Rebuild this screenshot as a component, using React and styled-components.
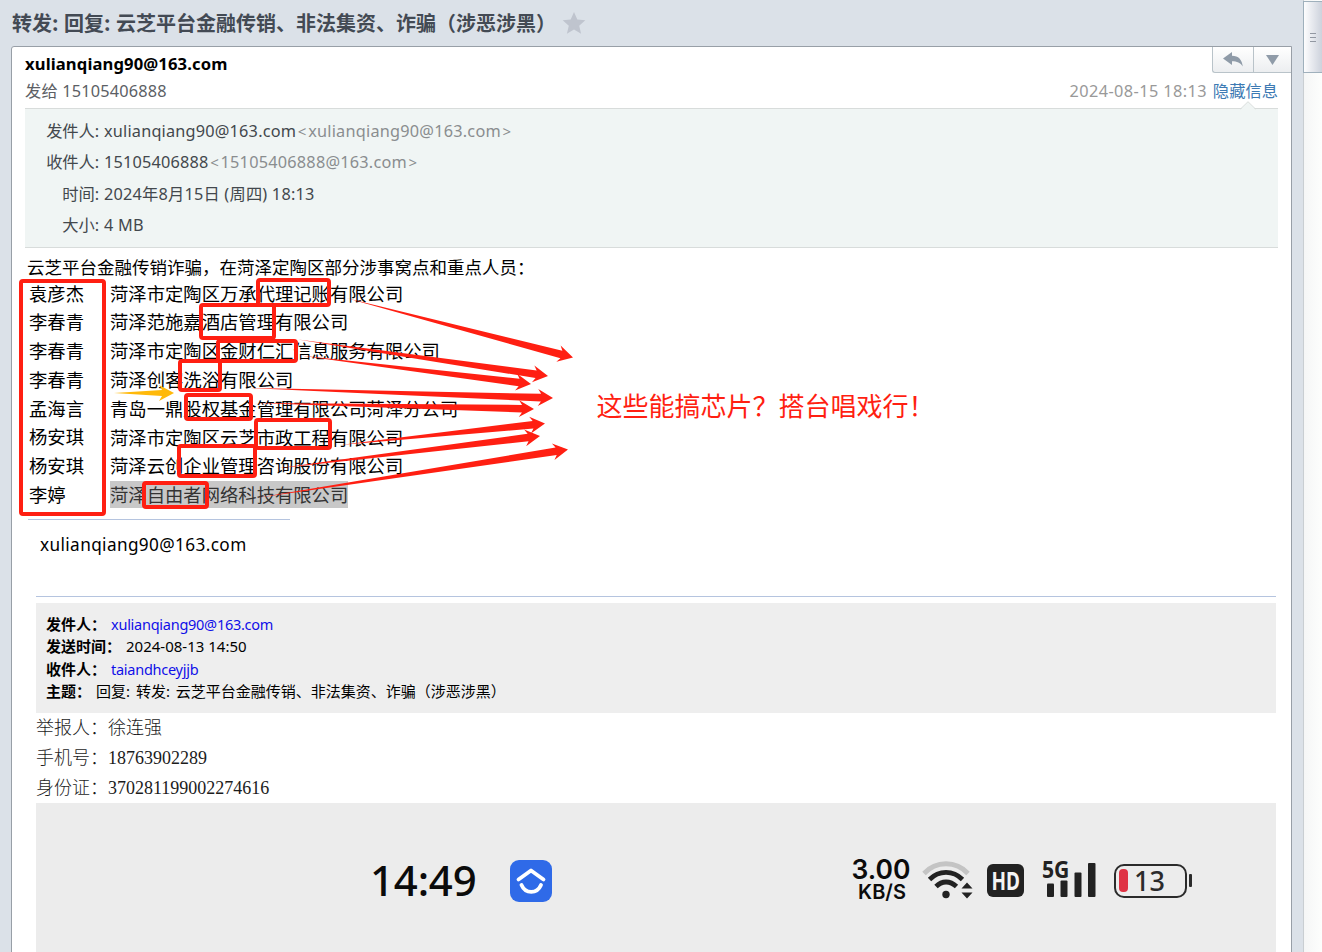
import React from "react";
import styled, { createGlobalStyle } from "styled-components";

const RED = "#ff1f12";

const GlobalStyle = createGlobalStyle`
  * { box-sizing: border-box; }
  body {
    margin: 0;
    overflow: hidden;
    background: #dbe1e8;
    font-family: "Noto Sans", "Noto Sans CJK SC", sans-serif;
  }
`;

const Page = styled.div`
  display: flex;
  width: 1322px;
  height: 952px;
  overflow: hidden;
  background: #dbe1e8;
`;

const Reader = styled.main`
  width: 1303px;
  padding: 0 11px;
  display: flex;
  flex-direction: column;
`;

const Subject = styled.header`
  flex: none;
  display: flex;
  align-items: center;
  gap: 6px;
  height: 46px;
  padding-left: 1px;
`;

const SubjectText = styled.h1`
  margin: 0;
  font: 700 20px/46px "Noto Sans CJK SC", sans-serif;
  color: #434a54;
  word-spacing: 1px;
  white-space: pre;
`;

const Card = styled.article`
  position: relative;
  flex: none;
  height: 920px;
  padding: 0 13px;
  background: #fff;
  border: 1px solid #989fa7;
  border-radius: 3px 0 0 0;
`;

const Actions = styled.div`
  position: absolute;
  top: 0;
  right: 0;
  display: flex;
  height: 26px;
  border: solid #b9c3c9;
  border-width: 0 0 1px 1px;
  border-radius: 0 0 0 3px;
  background: linear-gradient(#fff, #eceef0);
`;

const Action = styled.span`
  display: flex;
  align-items: center;
  justify-content: center;
  width: ${(p) => p.$width}px;
  border-left: ${(p) => (p.$divided ? "1px solid #b9c3c9" : "0")};
`;

const Sender = styled.div`
  height: 34px;
  font-size: 16.6px;
  line-height: 34px;
  font-weight: 700;
  letter-spacing: 0.13px;
`;

const MetaLine = styled.div`
  display: flex;
  justify-content: space-between;
  height: 27px;
  font-size: 16.3px;
  line-height: 20px;
  color: #5c6065;
  letter-spacing: 0.18px;
`;

const Sent = styled.span`
  color: #999;
  letter-spacing: 0.4px;
`;

const HideLink = styled.a`
  margin-left: 6px;
  color: #3d7ab3;
  letter-spacing: 0;
`;

const Details = styled.section`
  position: relative;
  height: 140px;
  padding-top: 7px;
  background: #f0f5f4;
  border: solid #d8dcdb;
  border-width: 1px 0;
`;

const Pointer = styled.svg`
  position: absolute;
  top: -8px;
  right: 22px;
`;

const DetailRow = styled.div`
  display: flex;
  height: 31.3px;
  font-size: 16.3px;
  line-height: 31.3px;
  color: #43484d;
  letter-spacing: 0.19px;
  white-space: pre;
`;

const DetailLabel = styled.span`
  width: 74px;
  margin-right: 5px;
  text-align: right;
  letter-spacing: -0.1px;
`;

const Address = styled.span`
  color: #8a8d8f;
  letter-spacing: 0.22px;
`;

const Bracket = styled.span`
  display: inline-block;
  width: 12px;
  font-size: 15px;
  text-align: center;
`;

const Intro = styled.p`
  margin: 7px 0 0 2px;
  height: 23.5px;
  font: 17.5px/24px "Noto Sans CJK SC", sans-serif;
  color: #000;
`;

const Suspects = styled.div`
  margin-left: 4px;
  font: 18.33px/28.8px "Noto Sans CJK SC", sans-serif;
  color: #000;
`;

const Suspect = styled.div`
  display: flex;
  height: 28.8px;
`;

const Name = styled.span`
  width: 81px;
`;

const Company = styled.span`
  display: flex;
  align-items: center;
  height: 27px;
  margin-top: 1px;
  background: ${(p) => (p.$selected ? "#c8c8c8" : "transparent")};
  color: ${(p) => (p.$selected ? "#333" : "#000")};
`;

const Rule = styled.div`
  height: 1px;
  width: ${(p) => p.$width}px;
  margin: ${(p) => p.$margin};
  background: #b5c4df;
`;

const Signature = styled.div`
  margin: 13px 0 0 15px;
  height: 24px;
  font-size: 17.2px;
  line-height: 24px;
  letter-spacing: 0.38px;
`;

const Quoted = styled.section`
  width: 1240px;
  height: 110px;
  margin: 6px 0 0 11px;
  padding: 9.6px 10px 0;
  background: #eee;
  font-size: 15px;
  line-height: 22.4px;
`;

const QuotedRow = styled.div`
  display: flex;
  height: 22.4px;
  color: #000;
  word-spacing: ${(p) => p.$gap || 0}px;
  white-space: pre;
`;

const QuotedLabel = styled.b`
  margin-right: 5px;
`;

const QuotedLink = styled.a`
  color: #1010e8;
  font-size: 14.5px;
  letter-spacing: -0.26px;
`;

const Reporter = styled.div`
  margin-left: 11px;
  height: 30px;
  font: 300 18px/30px "Liberation Serif", "Noto Sans CJK SC", serif;
  color: #1c1c1c;
  white-space: pre;
`;

const Attachment = styled.div`
  display: flex;
  align-items: center;
  width: 1240px;
  height: 170px;
  margin-left: 11px;
  padding: 0 84px 15px 334px;
  background: #ececec;
  color: #0b0b0b;
`;

const Clock = styled.span`
  width: 140px;
  margin-top: -1px;
  font-size: 42px;
  line-height: 50px;
  font-weight: 500;
  letter-spacing: -0.2px;
`;

const Speed = styled.div`
  width: 60px;
  margin: 0 11px 0 299px;
  font-family: Inter, sans-serif;
  font-weight: 600;
  text-align: center;
`;

const SpeedValue = styled.div`
  font-size: 26.5px;
  line-height: 23px;
`;

const SpeedUnit = styled.div`
  margin-right: -2px;
  font-size: 20px;
  line-height: 22px;
`;

const HdBadge = styled.span`
  width: 37px;
  height: 33px;
  margin: 0 18px 0 14px;
  border-radius: 6px;
  background: #222;
  color: #f4f4f4;
  font: 700 25px/33px "Noto Sans", sans-serif;
  text-align: center;
`;

const HdText = styled.span`
  display: inline-block;
  margin: 0 -5px;
  transform: scaleX(0.76);
`;

const Signal = styled.div`
  position: relative;
  width: 54px;
  height: 38px;
`;

const Network = styled.span`
  position: absolute;
  left: 0;
  top: -5px;
  font: 700 23px/24px "Noto Sans", sans-serif;
  color: #222;
  transform: scaleX(0.92);
  transform-origin: left;
`;

const Battery = styled.div`
  position: relative;
  display: flex;
  align-items: center;
  width: 73px;
  height: 34px;
  margin-left: 18px;
  padding-left: 3px;
  border: 2.5px solid #2b2b2b;
  border-radius: 10px;
  font-size: 27px;
  line-height: 28px;
  font-weight: 500;
  color: #2b2b2b;

  &::after {
    content: "";
    position: absolute;
    right: -7px;
    top: 8px;
    width: 3px;
    height: 13px;
    border-radius: 1px;
    background: #2b2b2b;
  }
`;

const Charge = styled.span`
  width: 9px;
  height: 23px;
  margin-right: 6px;
  border-radius: 4px;
  background: #df3344;
`;

const Scrollbar = styled.aside`
  width: 19px;
  height: 952px;
  padding-top: 1px;
  background: linear-gradient(90deg, #f5f6f6, #fdfefd);
  border-left: 1px solid #c9ced2;
`;

const Thumb = styled.div`
  display: flex;
  flex-direction: column;
  align-items: center;
  justify-content: center;
  gap: 3px;
  height: 72px;
  margin-left: -1px;
  border: 1px solid #9fb0bc;
  border-right: 0;
  background: linear-gradient(90deg, #fdfdfe, #cdd2dc);
`;

const Grip = styled.i`
  width: 6px;
  height: 1px;
  background: #9298a2;
`;

const Markup = styled.svg`
  position: absolute;
  left: 0;
  top: 0;
  pointer-events: none;
`;

const Frame = styled.div`
  position: absolute;
  left: ${(p) => p.$x}px;
  top: ${(p) => p.$y}px;
  width: ${(p) => p.$w}px;
  height: ${(p) => p.$h}px;
  border: 4px solid ${RED};
  border-radius: 4px;
`;

const Remark = styled.div`
  position: absolute;
  left: 596.5px;
  top: 387px;
  font: 26px/36px "Noto Sans CJK SC", sans-serif;
  color: ${RED};
  white-space: nowrap;
`;

const suspects = [
  ["袁彦杰", "菏泽市定陶区万承代理记账有限公司"],
  ["李春青", "菏泽范施嘉酒店管理有限公司"],
  ["李春青", "菏泽市定陶区金财仁汇信息服务有限公司"],
  ["李春青", "菏泽创客洗浴有限公司"],
  ["孟海言", "青岛一鼎股权基金管理有限公司菏泽分公司"],
  ["杨安琪", "菏泽市定陶区云芝市政工程有限公司"],
  ["杨安琪", "菏泽云创企业管理咨询股份有限公司"],
  ["李婷", "菏泽自由者网络科技有限公司"],
];

const frames = [
  [19, 279, 87, 237],
  [256, 278, 75, 29],
  [199, 303, 77, 37],
  [216, 339, 82, 24],
  [178, 359, 44, 33],
  [184, 393, 69, 28],
  [254, 418, 78, 32],
  [177, 444, 80, 34],
  [142, 481, 67, 28],
];

const arrows = [
  [346, 298, 573, 357.5],
  [298, 339.5, 548, 376],
  [300, 355.5, 531, 384],
  [250, 388, 553, 398],
  [255, 403, 534, 409],
  [340, 445, 545, 423.5],
  [276, 468.5, 540, 436],
  [256, 498, 568, 449.5],
];

// A tapering arrow: the shaft widens from a point at the tail up to a barbed head.
function Arrow({ from, color = RED, shaft = 3.8, barb = 8.4 }) {
  const [x1, y1, x2, y2] = from;
  const len = Math.hypot(x2 - x1, y2 - y1);
  const angle = (Math.atan2(y2 - y1, x2 - x1) * 180) / Math.PI;
  const pts = [
    [0, 0],
    [len - 12, -shaft],
    [len - 15, -barb],
    [len, 0],
    [len - 15, barb],
    [len - 12, shaft],
  ];
  return (
    <polygon
      points={pts.map((p) => p.join(",")).join(" ")}
      transform={`translate(${x1} ${y1}) rotate(${angle})`}
      fill={color}
    />
  );
}

const Detail = ({ label, children }) => (
  <DetailRow>
    <DetailLabel>{label}</DetailLabel>
    {children}
  </DetailRow>
);

const Mailbox = ({ children }) => (
  <Address>
    <Bracket>&lt;</Bracket>
    {children}
    <Bracket>&gt;</Bracket>
  </Address>
);

const StatusBar = () => (
  <Attachment>
    <Clock>14:49</Clock>
    <svg width="42" height="42" viewBox="0 0 42 42">
      <rect width="42" height="42" rx="9" fill="#2f6ae8" />
      <g fill="none" stroke="#fff" strokeWidth="3.8" strokeLinecap="round" strokeLinejoin="round">
        <path d="M8.500 19.500 21 10.500l12.500 9" />
        <path d="M11.500 25c4 9.200 15.500 9.200 19.500 0" />
      </g>
    </svg>
    <Speed>
      <SpeedValue>3.00</SpeedValue>
      <SpeedUnit>KB/S</SpeedUnit>
    </Speed>
    <svg width="51" height="40" viewBox="0 0 51 40">
      <g fill="none" strokeWidth="4.800">
        <path d="M2 12.500C14 -.5 34 -.5 46 12.500" stroke="#c4c4c4" />
        <path d="M7.500 18.500C17 9 31 9 40.500 18.500" stroke="#222" />
        <path d="M14 25.500C20 19.500 28 19.500 34.500 25.500" stroke="#222" />
      </g>
      <circle cx="24" cy="33.500" r="3.700" fill="#222" />
      <path d="M39.500 27.500 45 21.500l5.500 6zM39.500 31.500 45 37.500l5.500-6z" fill="#222" />
    </svg>
    <HdBadge>
      <HdText>HD</HdText>
    </HdBadge>
    <Signal>
      <svg width="54" height="38" viewBox="0 0 54 38" fill="#222">
        <rect x="5" y="21.500" width="7" height="13.500" rx="1" />
        <rect x="18.500" y="18.500" width="7" height="16.500" rx="1" />
        <rect x="32.500" y="10.500" width="7" height="24.500" rx="1" />
        <rect x="46" y="1" width="7.500" height="34" rx="1" />
      </svg>
      <Network>5G</Network>
    </Signal>
    <Battery>
      <Charge />
      13
    </Battery>
  </Attachment>
);

export default function App() {
  return (
    <Page>
      <GlobalStyle />
      <Reader>
        <Subject>
          <SubjectText>转发: 回复: 云芝平台金融传销、非法集资、诈骗（涉恶涉黑）</SubjectText>
          <svg width="24" height="22" viewBox="0 0 24 22">
            <path d="M12 0l3.300 7.600 8 .7-6.100 5.400 1.900 8.100L12 17.500l-7.100 4.300 1.900-8.100L.7 8.300l8-.7z" fill="#bfc4ce" />
          </svg>
        </Subject>
        <Card>
          <Actions>
            <Action $width={40}>
              <svg width="20" height="15" viewBox="0 0 20 15">
                <path d="M0 6.500 9 0v3.700c6.500 0 10 4 10.800 10.800C17.500 10.800 14 9.300 9 9.300V13z" fill="#8f9ba8" />
              </svg>
            </Action>
            <Action $width={38} $divided>
              <svg width="13" height="10" viewBox="0 0 13 10">
                <path d="M0 0h13L6.500 10z" fill="#8f9ba8" />
              </svg>
            </Action>
          </Actions>
          <Sender>xulianqiang90@163.com</Sender>
          <MetaLine>
            <span>发给 15105406888</span>
            <Sent>
              2024-08-15 18:13
              <HideLink>隐藏信息</HideLink>
            </Sent>
          </MetaLine>
          <Details>
            <Pointer width="16" height="9" viewBox="0 0 16 9">
              <path d="M0 9 8 1l8 8" fill="#f0f5f4" />
              <path d="M0.500 8 8 .7 15.500 8" fill="none" stroke="#d8dcdb" />
            </Pointer>
            <Detail label="发件人:">
              xulianqiang90@163.com<Mailbox>xulianqiang90@163.com</Mailbox>
            </Detail>
            <Detail label="收件人:">
              15105406888<Mailbox>15105406888@163.com</Mailbox>
            </Detail>
            <Detail label="时间:">2024年8月15日 (周四) 18:13</Detail>
            <Detail label="大小:">4 MB</Detail>
          </Details>

          <Intro>云芝平台金融传销诈骗，在菏泽定陶区部分涉事窝点和重点人员：</Intro>
          <Suspects>
            {suspects.map(([name, company], i) => (
              <Suspect key={i}>
                <Name>{name}</Name>
                <Company $selected={i === suspects.length - 1}>{company}</Company>
              </Suspect>
            ))}
          </Suspects>
          <Rule $width={262} $margin="10.6px 0 0 3px" />
          <Signature>xulianqiang90@163.com</Signature>
          <Rule $width={1240} $margin="39px 0 0 11px" />
          <Quoted>
            <QuotedRow>
              <QuotedLabel>发件人：</QuotedLabel>
              <QuotedLink>xulianqiang90@163.com</QuotedLink>
            </QuotedRow>
            <QuotedRow>
              <QuotedLabel>发送时间：</QuotedLabel>2024-08-13 14:50
            </QuotedRow>
            <QuotedRow>
              <QuotedLabel>收件人：</QuotedLabel>
              <QuotedLink>taiandhceyjjb</QuotedLink>
            </QuotedRow>
            <QuotedRow $gap={2}>
              <QuotedLabel>主题：</QuotedLabel>回复: 转发: 云芝平台金融传销、非法集资、诈骗（涉恶涉黑）
            </QuotedRow>
          </Quoted>
          <Reporter>举报人：徐连强</Reporter>
          <Reporter>手机号：18763902289</Reporter>
          <Reporter>身份证：370281199002274616</Reporter>
          <StatusBar />
        </Card>
      </Reader>
      <Scrollbar>
        <Thumb>
          <Grip />
          <Grip />
          <Grip />
        </Thumb>
      </Scrollbar>

      {frames.map(([x, y, w, h]) => (
        <Frame key={`${x}-${y}`} $x={x} $y={y} $w={w} $h={h} />
      ))}
      <Markup width="640" height="520" viewBox="0 0 640 520">
        {arrows.map((a) => (
          <Arrow key={a.join()} from={a} />
        ))}
        <Arrow from={[114, 393, 174, 393]} color="#ffb90a" shaft={3} barb={8} />
      </Markup>
      <Remark>这些能搞芯片？搭台唱戏行！</Remark>
    </Page>
  );
}
